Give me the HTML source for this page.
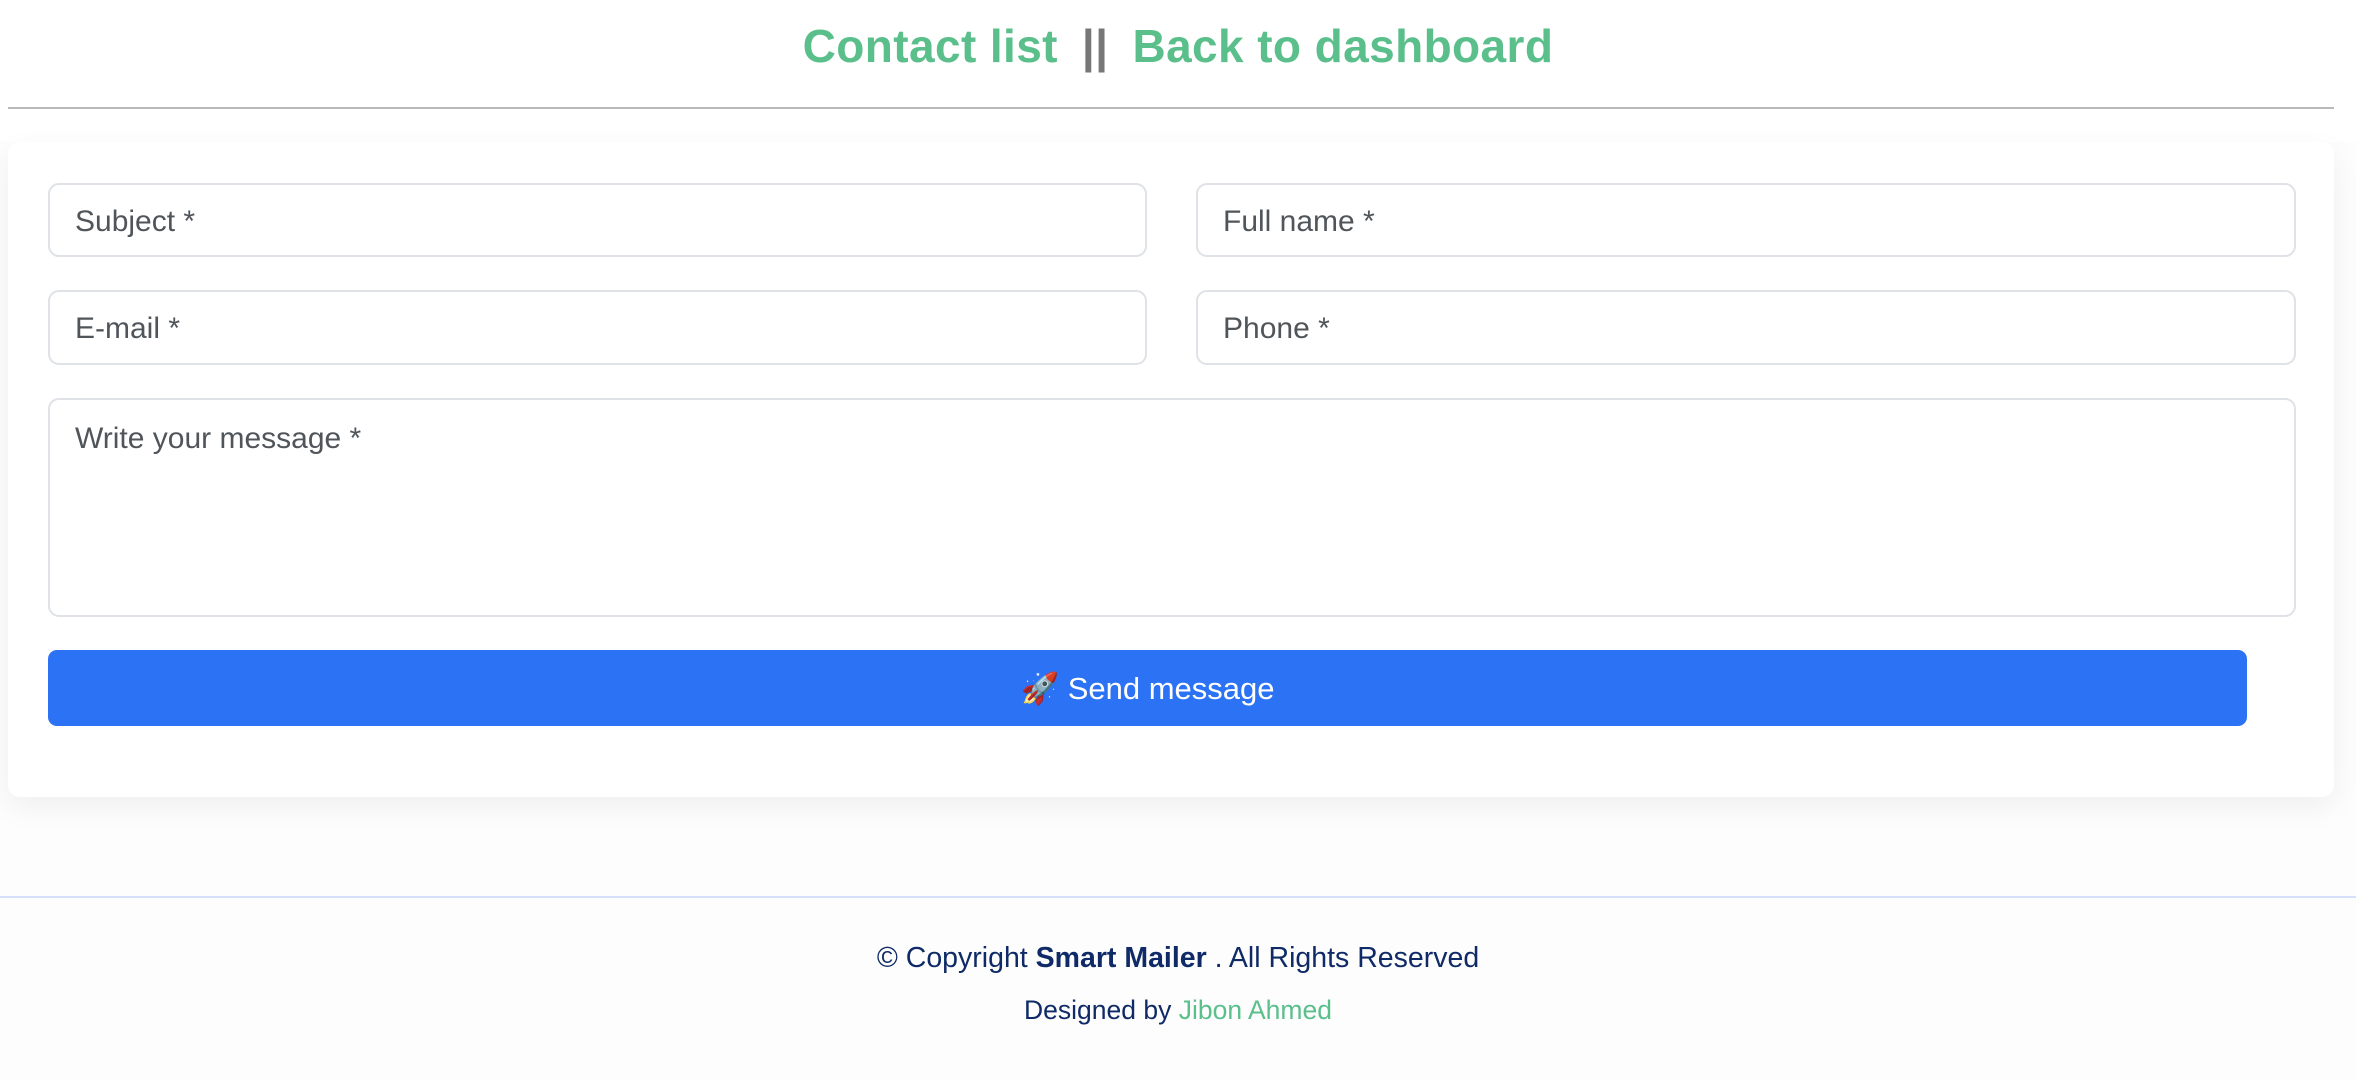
<!DOCTYPE html>
<html><head><meta charset="utf-8"><style>
*{box-sizing:border-box;margin:0;padding:0}
body{width:2356px;height:1080px;background:#fdfdfd;font-family:"Liberation Sans",sans-serif;position:relative;overflow:hidden}
.top{position:absolute;left:0;top:0;width:2356px;height:142px;background:#fff}
.hdr{position:absolute;left:0;width:2356px;top:19px;text-align:center;font-size:46px;font-weight:bold;color:#5bbf8c;letter-spacing:0.4px}
.hdr .sep{color:#777;margin:0 24px}
.hline{position:absolute;left:8px;width:2326px;top:107px;height:2px;background:#b9b9b9}
.card{position:absolute;left:8px;top:142px;width:2326px;height:655px;background:#fff;border-radius:12px;box-shadow:0 10px 30px rgba(0,0,0,0.06)}
.in{position:absolute;border:2px solid #dfe2e6;border-radius:11px;background:#fff;font-size:30px;color:#50555a;padding-left:25px;line-height:74px}
.btn{position:absolute;left:48px;top:650px;width:2199px;height:76px;background:#2c72f4;border-radius:9px;color:#fff;font-size:31px;text-align:center;line-height:78px}
.fline{position:absolute;left:0;width:2356px;top:896px;height:2px;background:#d6e0fa}
.ft{position:absolute;left:0;width:2356px;text-align:center;color:#0f2a66}
</style></head><body>
<div class="top"></div>
<div class="hdr">Contact list<span class="sep">||</span>Back to dashboard</div>
<div class="hline"></div>
<div class="card"></div>
<div class="in" style="left:48px;top:183px;width:1099px;height:74px">Subject *</div>
<div class="in" style="left:1196px;top:183px;width:1100px;height:74px">Full name *</div>
<div class="in" style="left:48px;top:290px;width:1099px;height:75px">E-mail *</div>
<div class="in" style="left:1196px;top:290px;width:1100px;height:75px">Phone *</div>
<div class="in" style="left:48px;top:398px;width:2248px;height:219px;line-height:1;padding-top:24px">Write your message *</div>
<div class="btn">🚀 Send message</div>
<div class="fline"></div>
<div class="ft" style="top:942px;font-size:28.5px">© Copyright <b>Smart Mailer</b> . All Rights Reserved</div>
<div class="ft" style="top:995px;font-size:26.5px">Designed by <span style="color:#5bbf8c">Jibon Ahmed</span></div>
</body></html>
